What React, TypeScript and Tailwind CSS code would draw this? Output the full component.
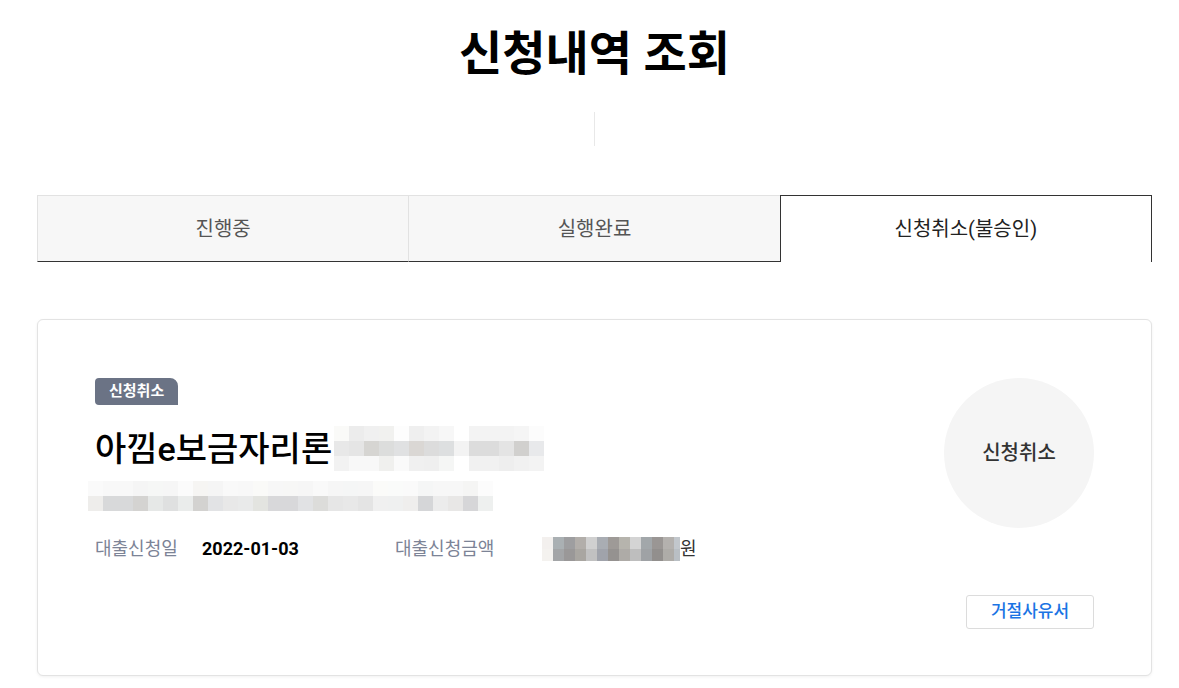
import React from "react";

const titleBlur: string[][] = [
  ["#fafaf8", "#ececec", "#f0f0f0", "#f1f1ef", "#fdfdfd", "#efefef", "#f3f3f3", "#f7f7f7", "#ffffff", "#f3f3f3", "#f3f3f3", "#f3f3f3", "#f5f5f5", "#fcfcfc"],
  ["#e8e8e8", "#e5e5e5", "#d6d5d2", "#dcdddc", "#e0e1e2", "#dad7d4", "#dcdcdc", "#dddfe0", "#f3f3f3", "#dcdcdc", "#dcdcdc", "#e4e4e4", "#d1d0ce", "#e8e9eb"],
  ["#f2f2f2", "#f8f8f8", "#f8f8f8", "#f0f0ee", "#fafafa", "#f0f0f0", "#efefef", "#f5f6f5", "#ffffff", "#f1f1f1", "#f1f1f1", "#eeeeee", "#f1f1f1", "#f3f3f3"],
];

const lineBlur: string[][] = [
  ["#fafafa", "#f8f8f8", "#f8f8f8", "#f5f5f5", "#f6f7f6", "#f6f6f6", "#fbfbfb", "#f6f5f3", "#f5f5f5", "#f9f9f9", "#f8f8f8", "#fafaf8", "#f7f7f7", "#f7f7f6", "#f6f6f6", "#f9f9f9", "#f6f6f6", "#f5f6f6", "#f6f6f6", "#fbfbf9", "#fafbfa", "#fafafa", "#f5f6f6", "#f7f7f7", "#f7f7f7", "#f5f5f4", "#fcfcfc"],
  ["#eeedeb", "#d8d9da", "#d8d9da", "#d4d3d1", "#e6e8e7", "#dfe0e0", "#eaeceb", "#d3d2d0", "#e2e3e5", "#e8e8e8", "#e9eaea", "#e3e4e0", "#d8d8da", "#d8d8da", "#e1e2e4", "#dcdcda", "#e6e6e6", "#e8e8e8", "#e4e4e4", "#f0f0f0", "#eff0f0", "#efeeed", "#d5d6d8", "#ececec", "#e8e7e6", "#d6d6d8", "#eef0ef"],
];

const amountBlur: string[][] = [
  ["#f3f0ee", "#aab0b3", "#9e9ea0", "#b2aeaa", "#d0d0d0", "#a9adb3", "#9e9a97", "#b6b4ad", "#d4d4d4", "#a2a7aa", "#9a9694", "#b4b1ae", "#c2c7cc"],
  ["#f4f2ef", "#a3a5a7", "#9a9898", "#a9a6a1", "#c1c1c1", "#a0a3ab", "#959290", "#aeaba7", "#bebebe", "#9fa2a5", "#928f8d", "#aeaca8", "#b9bfc4"],
];

function Pixels({ rows, size, h, lastW }: { rows: string[][]; size: number; h?: number; lastW?: number }) {
  return (
    <div className="flex flex-col">
      {rows.map((r, i) => (
        <div key={i} className="flex">
          {r.map((c, j) => (
            <div
              key={j}
              style={{
                background: c,
                width: lastW !== undefined && j === r.length - 1 ? lastW : size,
                height: h ?? size,
              }}
            />
          ))}
        </div>
      ))}
    </div>
  );
}

export default function App() {
  return (
    <div
      className="min-h-[688px] bg-white text-[#111]"
      style={{ fontFamily: "Roboto, 'Noto Sans CJK KR', 'Noto Sans', sans-serif" }}
    >
      <div className="pl-[37px]">
        <div className="w-[1115px]">
          <h1 className="pt-[24px] text-center text-[47px] font-bold leading-[60px] text-black">
            신청내역 조회
          </h1>
          <div className="mx-auto mt-[28px] h-[34px] w-px bg-[#e8e8e8]" />

          <div className="mt-[49px] flex h-[67px]">
            <div className="flex flex-1 items-center justify-center border-t border-l border-b border-t-[#e2e2e2] border-l-[#e2e2e2] border-b-[#333] bg-[#f7f7f7] text-[20px] text-[#555]">
              진행중
            </div>
            <div className="flex flex-1 items-center justify-center border-t border-l border-b border-t-[#e2e2e2] border-l-[#e2e2e2] border-b-[#333] bg-[#f7f7f7] text-[20px] text-[#555]">
              실행완료
            </div>
            <div className="flex flex-1 items-center justify-center border-t border-l border-r border-[#333] bg-white text-[20px] text-[#222]">
              신청취소(불승인)
            </div>
          </div>

          <div className="mt-[57px] flex rounded-[6px] border border-[#e3e3e3] bg-white pt-[58px] pr-[57px] pb-[46px] pl-[57px] shadow-[0_1px_3px_rgba(0,0,0,0.06)]">
            <div className="flex-1">
              <div className="inline-flex h-[27px] items-center rounded-tl-[4px] rounded-tr-[8px] rounded-bl-[4px] bg-[#6b7385] px-[14px] text-[15px] font-bold text-white">
                신청취소
              </div>
              <div className="mt-[21px] flex items-center">
                <span className="text-[34px] font-medium leading-[44px] text-black">
                  아낌e보금자리론
                </span>
                <div className="ml-[2px]">
                  <Pixels rows={titleBlur} size={15} />
                </div>
              </div>
              <div className="mt-[10px] -ml-[7px]">
                <Pixels rows={lineBlur} size={15} />
              </div>
              <div className="mt-[25px] flex items-center text-[18px] leading-[26px]">
                <div className="flex w-[300px] items-center">
                  <span className="w-[107px] text-[#7c8396]">대출신청일</span>
                  <span className="font-bold text-black">2022-01-03</span>
                </div>
                <div className="flex items-center">
                  <span className="w-[147px] text-[#7c8396]">대출신청금액</span>
                  <Pixels rows={amountBlur} size={11} h={12} lastW={6} />
                  <span className="text-[#333]">원</span>
                </div>
              </div>
            </div>
            <div className="flex flex-col items-end">
              <div className="flex h-[150px] w-[150px] items-center justify-center rounded-full bg-[#f5f5f5] text-[20px] font-medium text-[#333]">
                신청취소
              </div>
              <button className="mt-[67px] flex h-[34px] w-[128px] items-center justify-center rounded-[3px] border border-[#dcdcdc] bg-white text-[17px] font-medium text-[#1b74e4]">
                거절사유서
              </button>
            </div>
          </div>
        </div>
      </div>
    </div>
  );
}
